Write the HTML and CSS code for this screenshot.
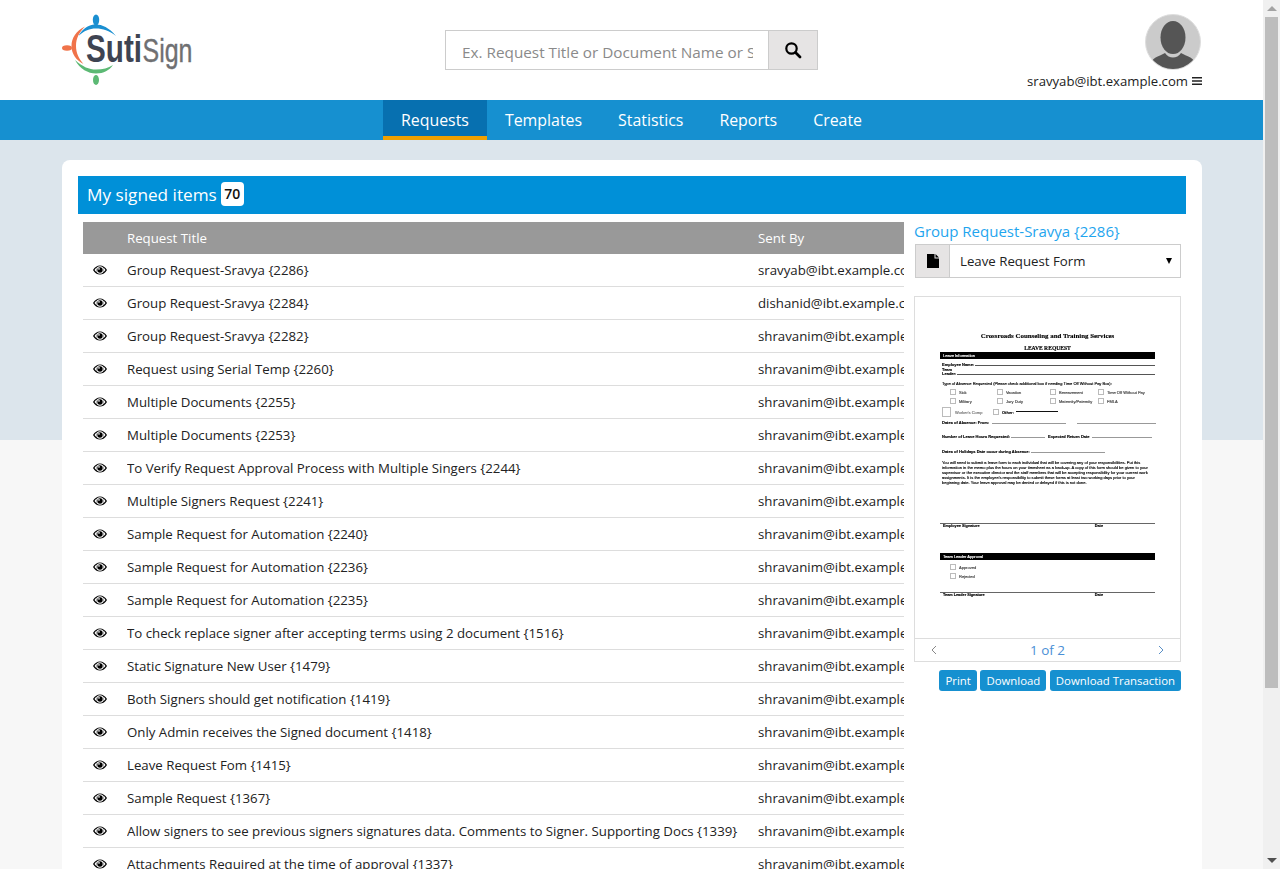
FILE: index.html
```html
<!DOCTYPE html>
<html lang="en">
<head>
<meta charset="utf-8">
<title>SutiSign - My signed items</title>
<link rel="stylesheet" href="styles.css">
</head>
<body>
<svg class="sprites" width="0" height="0" aria-hidden="true">
  <symbol id="eye" viewBox="0 0 14 10">
    <path fill-rule="evenodd" d="M0 5C1.8 2 4.2.4 7 .4S12.200 2 14 5c-1.800 3-4.200 4.600-7 4.600S1.800 8 0 5zm7-3.700a3.700 3.700 0 1 0 0 7.400 3.700 3.700 0 0 0 0-7.400zM1.500 5c.7 1 1.400 1.800 2.300 2.400C3.300 6.700 3 5.900 3 5s.3-1.700.8-2.400C2.900 3.200 2.200 4 1.500 5zm11 0c-.7-1-1.400-1.800-2.300-2.400.5.7.8 1.500.8 2.400s-.3 1.700-.8 2.400c.9-.6 1.600-1.400 2.300-2.400z"/>
    <circle cx="7" cy="5" r="2.700"/>
    <circle cx="6" cy="3.900" r=".8" fill="#fff"/>
  </symbol>
</svg>
<div class="shell">
  <div class="page">
    <header class="topbar">
      <svg class="logo" viewBox="62 14 130 72" width="130" height="72" role="img" aria-label="SutiSign">
        <path d="M79 35C84 27 90 24.500 96 24.500s13 3 20 11.500c-7-5.500-13-7.500-20-7.500s-11 2-17 7z" fill="#1a8fd1"/>
        <ellipse cx="96" cy="20" rx="3.200" ry="5.500" fill="#1a8fd1"/>
        <path d="M85 26.500C76 31 71.500 38 71.500 46c0 8 5 14.500 12 18-4.500-5-7.500-11-7.500-18 0-8 3.500-14 9-19.500z" fill="#f0734a"/>
        <ellipse cx="67" cy="48" rx="5" ry="2.800" fill="#f0734a"/>
        <path d="M75 60c5 9 13 13.500 21 13.500s13-3 17-8.500c-5 3-10 4.500-17 4.500S83 67 75 60z" fill="#5cb974"/>
        <ellipse cx="96" cy="80" rx="3" ry="5" fill="#5cb974"/>
        <text class="logo-suti" x="86" y="61.500" textLength="56" lengthAdjust="spacingAndGlyphs">Suti</text>
        <text class="logo-sign" x="142.500" y="61.500" textLength="50" lengthAdjust="spacingAndGlyphs">Sign</text>
      </svg>
      <form class="search">
        <input class="search-input" type="text" placeholder="Ex. Request Title or Document Name or Signer Name" readonly>
        <span class="search-btn">
          <svg viewBox="0 0 18 18" width="18" height="18"><circle cx="7.500" cy="7.500" r="5.200" fill="none" stroke="#000" stroke-width="2.200"/><path d="M11.500 11.500l4.500 4.500" stroke="#000" stroke-width="2.800" stroke-linecap="round"/></svg>
        </span>
      </form>
      <div class="user">
        <svg class="avatar" viewBox="0 0 56 56" width="56" height="56">
          <clipPath id="avclip"><circle cx="28" cy="28" r="27"/></clipPath>
          <circle cx="28" cy="28" r="27.500" fill="#cbcbcb" stroke="#dedede"/>
          <g clip-path="url(#avclip)">
            <path d="M5 56c0-9 3-12 10-14.500l5-2.500c2 3 5 4.500 8 4.500s6-1.500 8-4.500l5 2.500c7 2.500 10 5.500 10 14.500z" fill="#555"/>
            <ellipse cx="28" cy="23.500" rx="12.500" ry="16.500" fill="#555"/>
          </g>
        </svg>
        <div class="user-line">sravyab@ibt.example.com
          <svg viewBox="0 0 10 8" width="10" height="8"><path d="M0 0h10v1.600H0zM0 3.200h10v1.600H0zM0 6.400h10V8H0z" fill="#222"/></svg>
        </div>
      </div>
    </header>
    <nav class="mainnav">
      <a class="navitem active">Requests</a>
      <a class="navitem">Templates</a>
      <a class="navitem">Statistics</a>
      <a class="navitem">Reports</a>
      <a class="navitem">Create</a>
    </nav>
    <main class="card">
      <h1 class="cardtitle">My signed items <span class="badge">70</span></h1>
      <div class="columns">
        <div class="listwrap">
          <table class="list">
            <colgroup><col class="c-eye"><col class="c-title"><col class="c-sent"></colgroup>
            <thead><tr><th></th><th>Request Title</th><th>Sent By</th></tr></thead>
            <tbody>
              <tr><td class="eye"><svg><use href="#eye"/></svg></td><td>Group Request-Sravya {2286}</td><td>sravyab@ibt.example.com</td></tr>
              <tr><td class="eye"><svg><use href="#eye"/></svg></td><td>Group Request-Sravya {2284}</td><td>dishanid@ibt.example.com</td></tr>
              <tr><td class="eye"><svg><use href="#eye"/></svg></td><td>Group Request-Sravya {2282}</td><td>shravanim@ibt.example.com</td></tr>
              <tr><td class="eye"><svg><use href="#eye"/></svg></td><td>Request using Serial Temp {2260}</td><td>shravanim@ibt.example.com</td></tr>
              <tr><td class="eye"><svg><use href="#eye"/></svg></td><td>Multiple Documents {2255}</td><td>shravanim@ibt.example.com</td></tr>
              <tr><td class="eye"><svg><use href="#eye"/></svg></td><td>Multiple Documents {2253}</td><td>shravanim@ibt.example.com</td></tr>
              <tr><td class="eye"><svg><use href="#eye"/></svg></td><td>To Verify Request Approval Process with Multiple Singers {2244}</td><td>shravanim@ibt.example.com</td></tr>
              <tr><td class="eye"><svg><use href="#eye"/></svg></td><td>Multiple Signers Request {2241}</td><td>shravanim@ibt.example.com</td></tr>
              <tr><td class="eye"><svg><use href="#eye"/></svg></td><td>Sample Request for Automation {2240}</td><td>shravanim@ibt.example.com</td></tr>
              <tr><td class="eye"><svg><use href="#eye"/></svg></td><td>Sample Request for Automation {2236}</td><td>shravanim@ibt.example.com</td></tr>
              <tr><td class="eye"><svg><use href="#eye"/></svg></td><td>Sample Request for Automation {2235}</td><td>shravanim@ibt.example.com</td></tr>
              <tr><td class="eye"><svg><use href="#eye"/></svg></td><td>To check replace signer after accepting terms using 2 document {1516}</td><td>shravanim@ibt.example.com</td></tr>
              <tr><td class="eye"><svg><use href="#eye"/></svg></td><td>Static Signature New User {1479}</td><td>shravanim@ibt.example.com</td></tr>
              <tr><td class="eye"><svg><use href="#eye"/></svg></td><td>Both Signers should get notification {1419}</td><td>shravanim@ibt.example.com</td></tr>
              <tr><td class="eye"><svg><use href="#eye"/></svg></td><td>Only Admin receives the Signed document {1418}</td><td>shravanim@ibt.example.com</td></tr>
              <tr><td class="eye"><svg><use href="#eye"/></svg></td><td>Leave Request Fom {1415}</td><td>shravanim@ibt.example.com</td></tr>
              <tr><td class="eye"><svg><use href="#eye"/></svg></td><td>Sample Request {1367}</td><td>shravanim@ibt.example.com</td></tr>
              <tr><td class="eye"><svg><use href="#eye"/></svg></td><td>Allow signers to see previous signers signatures data. Comments to Signer. Supporting Docs {1339}</td><td>shravanim@ibt.example.com</td></tr>
              <tr><td class="eye"><svg><use href="#eye"/></svg></td><td>Attachments Required at the time of approval {1337}</td><td>shravanim@ibt.example.com</td></tr>
            </tbody>
          </table>
        </div>
        <aside class="detail">
          <div class="detail-title">Group Request-Sravya {2286}</div>
          <div class="docselect">
            <span class="docselect-icon"><svg viewBox="0 0 12 14" width="12" height="14"><path d="M0 0h7.500v4.500H12V14H0zM8.500 0L12 3.500H8.500z" fill="#000"/></svg></span>
            <span class="docselect-name">Leave Request Form</span>
            <span class="docselect-caret"></span>
          </div>
          <div class="viewer">
            <div class="doc">
              <div class="doc-title">Crossroads Counseling and Training Services</div>
              <div class="doc-req">LEAVE REQUEST</div>
              <div class="doc-bar">Leave Information</div>
              <div class="doc-field f-name"><span>Employee Name:</span><i class="rule"></i></div>
              <div class="doc-field f-team"><span>Team</span></div>
              <div class="doc-field f-leader"><span>Leader:</span><i class="rule"></i></div>
              <div class="doc-field f-type"><span>Type of Absence Requested (Please check additional box if needing Time Off Without Pay Box):</span></div>
              <div class="doc-checks c-first">
                <span class="chk">Sick</span><span class="chk">Vacation</span><span class="chk">Bereavement</span><span class="chk">Time Off Without Pay</span>
              </div>
              <div class="doc-checks">
                <span class="chk">Military</span><span class="chk">Jury Duty</span><span class="chk">Maternity/Paternity</span><span class="chk">FMLA</span>
              </div>
              <div class="doc-other">
                <span class="chk big">Worker's Comp</span>
                <span class="chk dark">Other:</span><i class="rule short"></i>
              </div>
              <div class="doc-field f-dates"><span>Dates of Absence: From:</span><i class="rule gray r1"></i><i class="rule gray r2"></i></div>
              <div class="doc-field f-hours"><span>Number of Leave Hours Requested:</span><i class="rule gray r3"></i><span class="gap">Expected Return Date</span><i class="rule gray r4"></i></div>
              <div class="doc-field f-hol"><span>Dates of Holidays Date occur during Absence:</span><i class="rule gray r5"></i></div>
              <p class="doc-para">You will need to submit a leave form to each individual that will be covering any of your responsibilities. Put this information in the memo plus the hours on your timesheet as a back-up. A copy of this form should be given to your supervisor or the executive director and the staff members that will be accepting responsibility for your current work assignments. It is the employee's responsibility to submit these forms at least two working days prior to your beginning date. Your leave approval may be denied or delayed if this is not done.</p>
              <div class="doc-sign s-emp"><span>Employee Signature</span><span class="date">Date</span></div>
              <div class="doc-bar b-lead">Team Leader Approval</div>
              <div class="doc-checks c-stack"><span class="chk">Approved</span><span class="chk">Rejected</span></div>
              <div class="doc-sign s-lead"><span>Team Leader Signature</span><span class="date">Date</span></div>
            </div>
            <div class="pager">
              <svg viewBox="0 0 6 10" width="6" height="10"><path d="M5 1L1 5l4 4" fill="none" stroke="#888" stroke-width="1"/></svg>
              <span>1 of 2</span>
              <svg viewBox="0 0 6 10" width="6" height="10"><path d="M1 1l4 4-4 4" fill="none" stroke="#5a8fc6" stroke-width="1"/></svg>
            </div>
          </div>
          <div class="actions">
            <a class="btn">Print</a>
            <a class="btn">Download</a>
            <a class="btn">Download Transaction</a>
          </div>
        </aside>
      </div>
    </main>
  </div>
  <div class="scrollbar">
    <span class="arrow up"></span>
    <span class="thumb"></span>
    <span class="arrow down"></span>
  </div>
</div>
</body>
</html>
```
FILE: styles.css
```css
* { box-sizing: border-box; }
html, body { margin: 0; height: 869px; overflow: hidden; }
body { font-family: "Open Sans", "Noto Sans", sans-serif; color: #222; font-size: 13.25px; }
.sprites { display: block; height: 0; }
.shell { display: flex; height: 869px; overflow: hidden; }
.page {
  width: 1263px; height: 869px; overflow: hidden;
  background: linear-gradient(#dce5ec 440px, #f7f7f7 440px);
}

/* header */
.topbar { display: flex; height: 100px; background: #fff; padding: 0 61px 0 62px; align-items: flex-start; }
.logo { display: block; margin-top: 14px; flex: none; }
.logo-suti { font: bold 38px "Liberation Sans", sans-serif; fill: #3e4452; }
.logo-sign { font: 34px "Liberation Sans", sans-serif; fill: #6f7072; stroke: #6f7072; stroke-width: .4px; }
.search { display: flex; width: 373px; height: 40px; margin: 30px 0 0 253px; border: 1px solid #ccc; }
.search-input {
  flex: 1; min-width: 0; border: 0; outline: 0; padding: 3px 15px 0 16px;
  font: 15.3px "Open Sans", sans-serif; color: #666;
}
.search-input::placeholder { color: #8a8a8a; opacity: 1; }
.search-btn { width: 49px; background: #e6e4e4; border-left: 1px solid #ccc; display: flex; align-items: center; justify-content: center; }
.user { margin-left: auto; display: flex; flex-direction: column; align-items: flex-end; padding-top: 14px; }
.avatar { display: block; margin-right: 1px; }
.user-line { margin-top: 2px; font-size: 13.15px; line-height: 18px; color: #222; white-space: nowrap; display: flex; align-items: center; gap: 4px; }

/* nav */
.mainnav { display: flex; justify-content: center; height: 40px; background: #1690d0; }
.navitem { padding: 0 18px; font-size: 15.9px; line-height: 40px; color: #fff; }
.navitem.active { background: #0770b0; border-bottom: 4px solid #f0a000; }

/* card */
.card { margin: 20px 61px 0 62px; padding: 16px; background: #fff; border-radius: 8px 8px 0 0; height: 709px; }
.cardtitle { margin: 0; height: 38px; padding: 0 9px 2px; background: #0090d8; color: #fff; font-size: 17.2px; font-weight: 400; display: flex; align-items: center; gap: 4px; }
.badge { display: inline-block; height: 24px; padding: 0 3.500px; line-height: 24px; background: #fff; color: #111; border-radius: 4px; font-size: 14px; font-weight: 600; }
.columns { display: flex; align-items: flex-start; padding-left: 5px; }

/* list */
.listwrap { width: 821px; margin-top: 8px; overflow: hidden; flex: none; }
.list { width: 821px; table-layout: fixed; border-collapse: separate; border-spacing: 0; }
.c-eye { width: 44px; }
.c-title { width: 631px; }
.c-sent { width: 146px; }
.list th { height: 32px; background: #999; color: #fff; font-weight: 400; text-align: left; padding: 0; white-space: nowrap; }
.list td { height: 33px; padding: 0; border-bottom: 1px solid #ddd; white-space: nowrap; overflow: hidden; color: #222; }
.list td.eye { padding-left: 10px; }
.list td.eye svg { display: block; width: 14px; height: 10px; }

/* right panel */
.detail { width: 267px; margin-left: 10px; flex: none; }
.detail-title { height: 24px; margin-top: 6px; line-height: 22px; font-size: 15px; color: #1fa5ee; white-space: nowrap; }
.docselect { display: flex; align-items: center; height: 34px; margin-left: 1px; border: 1px solid #ccc; }
.docselect-icon { width: 34px; height: 100%; background: #e6e4e4; border-right: 1px solid #ccc; display: flex; align-items: center; justify-content: center; flex: none; }
.docselect-name { flex: 1; padding: 0 0 1px 10px; font-size: 13.25px; color: #222; }
.docselect-caret { width: 0; height: 0; margin-right: 8px; border-left: 3.500px solid transparent; border-right: 3.500px solid transparent; border-top: 6px solid #000; }
.viewer { margin-top: 18px; height: 366px; border: 1px solid #ddd; display: flex; flex-direction: column; }
.pager { margin-top: auto; height: 23px; border-top: 1px solid #ddd; display: flex; align-items: center; justify-content: space-between; padding: 0 16px; color: #4a8fd6; font-size: 13.5px; }
.actions { display: flex; justify-content: flex-end; gap: 3.500px; margin-top: 8px; }
.btn { height: 21px; line-height: 21px; padding: 0 6px; background: #1690d0; color: #fff; border-radius: 3px; font-size: 11.4px; white-space: nowrap; }

/* miniature document */
.doc { padding: 33px 25px 0; font-family: "Liberation Sans", sans-serif; font-size: 4px; line-height: 5px; color: #000; height: 341px; overflow: hidden; filter: blur(.3px); -webkit-text-stroke: .15px currentColor; }
.doc-title { font: bold 6.9px/8px "Liberation Serif", serif; text-align: center; white-space: nowrap; margin-top: 2px; }
.doc-req { font: bold 5.6px/6px "Liberation Serif", serif; text-align: center; margin-top: 5px; }
.doc-bar { height: 7px; margin-top: 1px; padding-left: 3px; background: #000; color: #fff; font: 4px/7px "Liberation Sans", sans-serif; }
.doc-field { display: flex; align-items: flex-end; padding-left: 2px; white-space: nowrap; }
.doc-field span { font-weight: 700; }
.rule { display: block; flex: 1; height: 1px; margin: 0 0 1px 1px; background: #555; }
.rule.gray { flex: none; background: #999; }
.rule.short { flex: none; width: 42px; background: #111; margin-left: 2px; }
.f-name { margin-top: 3px; height: 5px; }
.f-team { height: 4.500px; }
.f-leader { height: 4.500px; }
.f-type { margin-top: 5px; }
.f-type span { font-weight: 400; }
.doc-checks { display: grid; grid-template-columns: 47px 53px 48px auto; padding-left: 10px; margin-top: 4px; color: #444; white-space: nowrap; height: 5px; }
.c-first { margin-top: 3px; }
.chk { display: inline-flex; align-items: center; gap: 3px; }
.chk::before { content: ""; width: 4px; height: 4px; border: 1px solid #bbb; flex: none; }
.chk.big { color: #777; width: 51px; gap: 4px; }
.chk.big::before { width: 7px; height: 8px; }
.chk.dark { color: #111; font-weight: 700; }
.doc-other { display: flex; align-items: center; padding-left: 2px; margin-top: 5px; height: 8px; white-space: nowrap; }
.f-dates { margin-top: 3px; height: 6px; }
.r1 { width: 74px; margin-left: 3px; }
.r2 { width: 79px; margin-left: 11px; }
.f-hours { margin-top: 8px; height: 6px; }
.r3 { width: 34px; }
.gap { margin-left: 3px; }
.r4 { width: 60px; margin-left: 2px; }
.f-hol { margin-top: 9px; height: 6px; }
.r5 { width: 74px; }
.doc-para { margin: 6px 0 0; padding: 0 5px 0 2px; font-size: 4.05px; line-height: 5.100px; color: #000; }
.doc-sign { display: flex; border-top: 1px solid #666; padding-left: 3px; font-weight: 700; height: 5px; font-size: 3.8px; }
.s-emp { margin-top: 38px; }
.s-lead { margin-top: 13px; }
.doc-sign .date { margin-left: auto; margin-right: 52px; }
.b-lead { margin-top: 25px; }
.c-stack { display: flex; flex-direction: column; height: auto; gap: 3px; margin-top: 4px; }

/* scrollbar */
.scrollbar { width: 17px; height: 869px; background: #f0f0f0; display: flex; flex-direction: column; align-items: center; }
.arrow { width: 0; height: 0; border-left: 5px solid transparent; border-right: 5px solid transparent; flex: none; }
.arrow.up { margin-top: 6px; border-bottom: 5px solid #a3a3a3; }
.arrow.down { margin-top: auto; margin-bottom: 6px; border-top: 5px solid #505050; }
.thumb { width: 13px; height: 671px; margin-top: 6px; background: #bdbdbd; }
```
